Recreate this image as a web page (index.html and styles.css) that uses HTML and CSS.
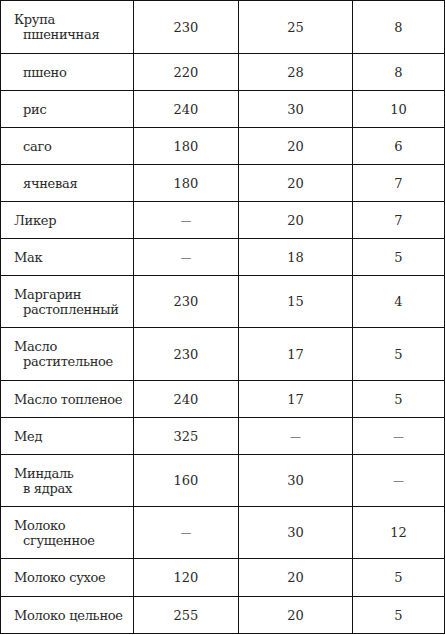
FILE: index.html
```html
<!DOCTYPE html>
<html lang="ru">
<head>
<meta charset="utf-8">
<link rel="stylesheet" href="styles.css">
</head>
<body>
<table class="tbl">
  <colgroup>
    <col class="c1"><col class="c2"><col class="c3"><col class="c4">
  </colgroup>
  <tr class="h53"><td class="name">Крупа<br>пшеничная</td><td>230</td><td>25</td><td>8</td></tr>
  <tr class="h37"><td class="name sub">пшено</td><td>220</td><td>28</td><td>8</td></tr>
  <tr class="h37"><td class="name sub">рис</td><td>240</td><td>30</td><td>10</td></tr>
  <tr class="h37"><td class="name sub">саго</td><td>180</td><td>20</td><td>6</td></tr>
  <tr class="h37"><td class="name sub">ячневая</td><td>180</td><td>20</td><td>7</td></tr>
  <tr class="h37"><td class="name">Ликер</td><td class="dash">—</td><td>20</td><td>7</td></tr>
  <tr class="h37"><td class="name">Мак</td><td class="dash">—</td><td>18</td><td>5</td></tr>
  <tr class="h52"><td class="name">Маргарин<br>растопленный</td><td>230</td><td>15</td><td>4</td></tr>
  <tr class="h53"><td class="name">Масло<br>растительное</td><td>230</td><td>17</td><td>5</td></tr>
  <tr class="h37"><td class="name">Масло топленое</td><td>240</td><td>17</td><td>5</td></tr>
  <tr class="h37"><td class="name">Мед</td><td>325</td><td class="dash">—</td><td class="dash">—</td></tr>
  <tr class="h52"><td class="name">Миндаль<br>в ядрах</td><td>160</td><td>30</td><td class="dash">—</td></tr>
  <tr class="h52"><td class="name">Молоко<br>сгущенное</td><td class="dash">—</td><td>30</td><td>12</td></tr>
  <tr class="h38"><td class="name">Молоко сухое</td><td>120</td><td>20</td><td>5</td></tr>
  <tr class="h37"><td class="name">Молоко цельное</td><td>255</td><td>20</td><td>5</td></tr>
</table>
</body>
</html>
```

FILE: styles.css
```css
html, body {
  margin: 0;
  padding: 0;
  background: #ffffff;
}

.tbl {
  border-collapse: collapse;
  table-layout: fixed;
  width: 444px;
  font-family: "DejaVu Serif", "Liberation Serif", serif;
  font-size: 13px;
  line-height: 15px;
  color: #2a2a2a;
}

.c1 { width: 133px; }
.c2 { width: 105px; }
.c3 { width: 114px; }
.c4 { width: 92px; }

.tbl td {
  border: 1px solid #111111;
  padding: 0;
  text-align: center;
  vertical-align: middle;
}

.tbl td.name {
  text-align: left;
  padding-left: 22px;
  text-indent: -9px;
  padding-right: 2px;
  white-space: nowrap;
  letter-spacing: -0.3px;
}

.tbl td.name.sub {
  text-indent: 0;
}

.tbl td.dash {
  font-size: 11px;
}

.h53 { height: 53px; }
.h52 { height: 52px; }
.h38 { height: 38px; }
.h37 { height: 37px; }
```
